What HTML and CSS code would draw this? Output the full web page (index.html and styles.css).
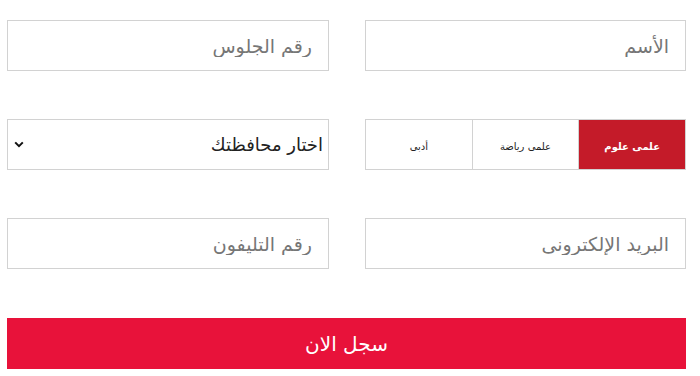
FILE: index.html
```html
<!DOCTYPE html>
<html lang="ar" dir="rtl">
<head>
<meta charset="utf-8">
<title>تسجيل</title>
<link rel="stylesheet" href="styles.css">
</head>
<body>
<form class="form">
  <div class="grid">
    <input class="field" type="text" placeholder="الأسم">
    <input class="field" type="text" placeholder="رقم الجلوس">
    <div class="segments">
      <button type="button" class="seg active">علمى علوم</button>
      <button type="button" class="seg">علمى رياضة</button>
      <button type="button" class="seg">أدبى</button>
    </div>
    <div class="select-wrap">
      <select class="select">
        <option>اختار محافظتك</option>
      </select>
      <svg class="chev" width="10" height="7" viewBox="0 0 10 7" aria-hidden="true"><path d="M1.2 1.4 5 5.2 8.8 1.4" fill="none" stroke="#111" stroke-width="2"/></svg>
    </div>
    <input class="field" type="email" placeholder="البريد الإلكترونى">
    <input class="field" type="tel" placeholder="رقم التليفون">
  </div>
  <button type="submit" class="submit">سجل الان</button>
</form>
</body>
</html>
```
FILE: styles.css
```css
* { box-sizing: border-box; }
html, body { margin: 0; background: #fff; }
body { font-family: "DejaVu Sans", sans-serif; }

.form {
  width: 679px;
  margin: 20px 14px 0 0;
  display: flex;
  flex-direction: column;
  gap: 49px;
}

.grid {
  display: grid;
  grid-template-columns: 321px 322px;
  column-gap: 36px;
  row-gap: 48px;
}

.field {
  height: 51px;
  border: 1px solid #d2d2d2;
  padding: 0 16px;
  font-family: inherit;
  font-size: 19px;
  color: #333;
  background: #fff;
  outline: none;
  direction: rtl;
  text-align: right;
}
.field::placeholder { color: #767676; }

.segments {
  display: flex;
  height: 51px;
  border: 1px solid #d2d2d2;
}
.seg {
  flex: 1;
  border: 0;
  border-left: 1px solid #d2d2d2;
  background: #fff;
  font-family: inherit;
  font-size: 10px;
  color: #222;
  padding: 4px 0 0;
}
.seg:last-child { border-left: 0; }
.seg.active { background: #c41b29; color: #fff; font-weight: bold; }

.select-wrap { position: relative; }
.select {
  width: 100%;
  height: 51px;
  border: 1px solid #d2d2d2;
  background: #fff;
  appearance: none;
  -webkit-appearance: none;
  font-family: inherit;
  font-size: 18px;
  color: #222;
  padding: 0 5px 0 30px;
  outline: none;
}
.chev { position: absolute; left: 7px; top: 22px; pointer-events: none; }

.submit {
  height: 51px;
  border: 0;
  background: #e8123a;
  color: #fff;
  font-family: inherit;
  font-size: 20px;
}
```
